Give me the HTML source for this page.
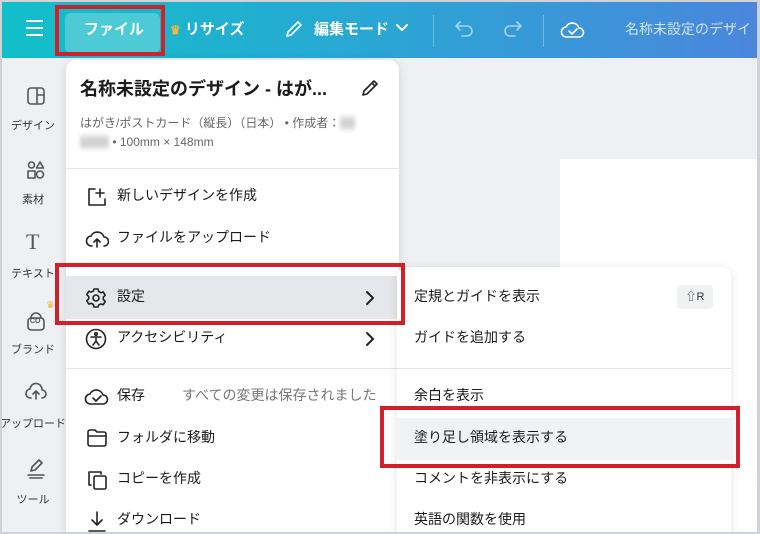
<!DOCTYPE html>
<html><head><meta charset="utf-8"><style>
*{margin:0;padding:0;box-sizing:border-box}
body{width:760px;height:534px;overflow:hidden;background:#cfd2d6;font-family:"Liberation Sans","Noto Sans CJK JP",sans-serif;position:relative}
#frame{position:absolute;left:2px;top:2px;width:755px;height:530px;background:#eef0f4;overflow:hidden}
.top{position:absolute;left:0;top:0;width:755px;height:56px;background:linear-gradient(90deg,#12bfc9 0%,#27a9d3 45%,#4b86dc 100%)}
.t{position:absolute;color:#fff;font-weight:bold;font-size:15px;white-space:nowrap}
.abs{position:absolute}
.side{position:absolute;left:0;top:56px;width:62px;height:480px;background:#eef0f4}
.sl{position:absolute;width:70px;left:-4px;text-align:center;font-size:11px;color:#333}
.menu{position:absolute;background:#fff;box-shadow:0 2px 10px rgba(0,0,0,.12)}
.it{position:absolute;font-size:14px;color:#1b1b1b;white-space:nowrap;margin-top:-2px}
.red{position:absolute;border:4px solid #d0202a}
svg{position:absolute;fill:none;stroke:#222;stroke-width:1.6;stroke-linecap:round;stroke-linejoin:round}
</style></head><body><div id="frame">
<div class="top"></div>
<div class="abs" style="left:24px;top:18px;width:17px;height:2px;background:#fff;box-shadow:0 7px 0 #fff,0 14px 0 #fff"></div>
<div class="abs" style="left:63px;top:11px;width:95px;height:40px;background:#4ccbd6;border-radius:6px"></div>
<div class="t" style="left:82px;top:16px">ファイル</div>
<div class="t" style="left:168px;top:16px"><span style="color:#f5b53a;font-size:12px">♛</span> リサイズ</div>
<svg style="left:282px;top:17px" width="20" height="20" viewBox="0 0 20 20"><path d="M3 17l1-4L14 3l3 3L7 16z" stroke="#fff"/></svg>
<div class="t" style="left:312px;top:16px">編集モード</div>
<svg style="left:393px;top:21px" width="14" height="10" viewBox="0 0 14 10"><path d="M2 2l5 5 5-5" stroke="#fff" stroke-width="2"/></svg>
<div class="abs" style="left:431px;top:13px;width:1px;height:32px;background:rgba(255,255,255,.3)"></div>
<svg style="left:452px;top:17px" width="22" height="20" viewBox="0 0 22 20"><path d="M6 3L2 7l4 4M2 7h11a5 5 0 010 10H8" stroke="rgba(255,255,255,.55)"/></svg>
<svg style="left:499px;top:17px" width="22" height="20" viewBox="0 0 22 20"><path d="M16 3l4 4-4 4M20 7H9a5 5 0 000 10h5" stroke="rgba(255,255,255,.55)"/></svg>
<div class="abs" style="left:541px;top:13px;width:1px;height:32px;background:rgba(255,255,255,.3)"></div>
<svg style="left:558px;top:17px" width="26" height="22" viewBox="0 0 26 22"><path d="M7 18a5 5 0 01-1-10 7 7 0 0113 1 4.5 4.5 0 010 9z M9 12l3 3 5-5" stroke="#fff"/></svg>
<div class="t" style="left:623px;top:17px;font-weight:normal;color:rgba(255,255,255,.75);font-size:14px">名称未設定のデザイ</div>

<div class="side"></div>
<svg style="left:24px;top:84px" width="20" height="20" viewBox="0 0 20 20"><rect x="2" y="2" width="16" height="16" rx="3" stroke="#555"/><path d="M11 2v16M11 9h7" stroke="#555"/></svg>
<div class="sl" style="top:115px">デザイン</div>
<svg style="left:24px;top:158px" width="20" height="20" viewBox="0 0 20 20"><circle cx="5.5" cy="5" r="3" stroke="#555"/><path d="M14 2l3.5 6h-7z" stroke="#555"/><rect x="2" y="11" width="7" height="7" stroke="#555"/><circle cx="14" cy="14.5" r="3.5" stroke="#555"/></svg>
<div class="sl" style="top:189px">素材</div>
<div class="abs" style="left:24px;top:227px;font-family:'Liberation Serif',serif;font-size:22px;color:#555">T</div>
<div class="sl" style="top:263px">テキスト</div>
<div class="abs" style="left:44px;top:298px;color:#f5b53a;font-size:10px">♛</div>
<svg style="left:24px;top:308px" width="20" height="22" viewBox="0 0 20 22"><rect x="2" y="8" width="16" height="12" rx="3" stroke="#555"/><path d="M5 8a5 5 0 0110 0" stroke="#555"/></svg>
<div class="abs" style="left:28px;top:316px;font-size:7px;color:#555;font-weight:bold">CO</div>
<div class="sl" style="top:339px">ブランド</div>
<svg style="left:23px;top:380px" width="22" height="20" viewBox="0 0 22 20"><path d="M6 16a4.5 4.5 0 01-1-9 6 6 0 0112 1 4 4 0 010 8M11 17v-7M8 12l3-3 3 3" stroke="#555"/></svg>
<div class="sl" style="top:413px">アップロード</div>
<svg style="left:24px;top:455px" width="20" height="22" viewBox="0 0 20 22"><path d="M5 14l1-4 7-7 3 3-7 7zM2 18h16M4 21h12" stroke="#555"/></svg>
<div class="sl" style="top:489px">ツール</div>

<div class="abs" style="left:558px;top:157px;width:200px;height:380px;background:#fff"></div>

<div class="menu" style="left:64px;top:58px;width:333px;height:480px;border-radius:10px 10px 0 0"></div>
<div class="it" style="left:78px;top:75px;font-size:18px;font-weight:bold">名称未設定のデザイン - はが...</div>
<svg style="left:358px;top:76px" width="20" height="20" viewBox="0 0 20 20"><path d="M3 17l1-4L14 3l3 3L7 16zM12 5l3 3"/></svg>
<div class="it" style="left:78px;top:114px;font-size:12px;color:#666">はがき/ポストカード（縦長）（日本） • 作成者：<span style="background:#ddd;filter:blur(2px);color:#ccc">■■</span></div>
<div class="it" style="left:78px;top:135px;font-size:12px;color:#666"><span style="background:#ddd;filter:blur(2px);color:#ccc">■■■■</span> • 100mm × 148mm</div>
<div class="abs" style="left:64px;top:166px;width:333px;height:1px;background:#e3e5e8"></div>
<svg style="left:84px;top:184px" width="22" height="22" viewBox="0 0 22 22"><path d="M9 3H3v16h16v-6M14 3v8M10 7h8"/></svg>
<div class="it" style="left:115px;top:185px">新しいデザインを作成</div>
<svg style="left:83px;top:227px" width="24" height="20" viewBox="0 0 24 20"><path d="M7 17a5 5 0 01-1-10 7 7 0 0113 1 4.5 4.5 0 010 9M12 18v-8M9 13l3-3 3 3"/></svg>
<div class="it" style="left:115px;top:227px">ファイルをアップロード</div>
<div class="abs" style="left:64px;top:274px;width:332px;height:43px;background:#e6e7ea"></div>
<svg style="left:83px;top:285px" width="22" height="22" viewBox="0 0 22 22"><circle cx="11" cy="11" r="3"/><path d="M9 2h4l.6 2.5 2.2 1.2 2.4-.8 2 3.4-1.9 1.8v2.4l1.9 1.8-2 3.4-2.4-.8-2.2 1.2L13 20H9l-.6-2.5-2.2-1.2-2.4.8-2-3.4 1.9-1.8V9.5L1.8 7.7l2-3.4 2.4.8 2.2-1.2z"/></svg>
<div class="it" style="left:115px;top:286px">設定</div>
<svg style="left:362px;top:288px" width="12" height="16" viewBox="0 0 12 16"><path d="M3 2l6 6-6 6" stroke-width="2"/></svg>
<svg style="left:83px;top:326px" width="22" height="22" viewBox="0 0 22 22"><circle cx="11" cy="11" r="9.5"/><circle cx="11" cy="6" r="1.3"/><path d="M6 9h10M11 9v4l-3 4M11 13l3 4"/></svg>
<div class="it" style="left:115px;top:327px">アクセシビリティ</div>
<svg style="left:362px;top:329px" width="12" height="16" viewBox="0 0 12 16"><path d="M3 2l6 6-6 6" stroke-width="2"/></svg>
<div class="abs" style="left:64px;top:366px;width:333px;height:1px;background:#e3e5e8"></div>
<svg style="left:82px;top:384px" width="26" height="22" viewBox="0 0 26 22"><path d="M7 18a5 5 0 01-1-10 7 7 0 0113 1 4.5 4.5 0 010 9zM9 12l3 3 5-5"/></svg>
<div class="it" style="left:115px;top:385px">保存</div>
<div class="it" style="left:180px;top:385px;color:#777">すべての変更は保存されました</div>
<svg style="left:84px;top:426px" width="22" height="20" viewBox="0 0 22 20"><path d="M2 4a2 2 0 012-2h5l2 2h7a2 2 0 012 2v10a2 2 0 01-2 2H4a2 2 0 01-2-2zM2 8h18"/></svg>
<div class="it" style="left:115px;top:427px">フォルダに移動</div>
<svg style="left:84px;top:467px" width="22" height="22" viewBox="0 0 22 22"><path d="M5 16H3V3h12v2"/><rect x="8" y="7" width="12" height="13" rx="1.5"/></svg>
<div class="it" style="left:115px;top:468px">コピーを作成</div>
<svg style="left:84px;top:508px" width="22" height="24" viewBox="0 0 22 24"><path d="M11 2v13M6 10l5 5 5-5M3 21h16"/></svg>
<div class="it" style="left:115px;top:509px">ダウンロード</div>

<div class="menu" style="left:395px;top:265px;width:334px;height:275px;border-radius:10px 10px 0 0"></div>
<div class="it" style="left:412px;top:286px">定規とガイドを表示</div>
<div class="abs" style="left:675px;top:283px;width:36px;height:24px;background:#f0f1f3;border-radius:4px;font-size:11px;color:#333;text-align:center;line-height:24px">⇧R</div>
<div class="it" style="left:412px;top:327px">ガイドを追加する</div>
<div class="abs" style="left:395px;top:366px;width:334px;height:1px;background:#e3e5e8"></div>
<div class="it" style="left:412px;top:385px">余白を表示</div>
<div class="abs" style="left:395px;top:416px;width:334px;height:42px;background:#f1f2f4"></div>
<div class="it" style="left:412px;top:427px">塗り足し領域を表示する</div>
<div class="it" style="left:412px;top:468px">コメントを非表示にする</div>
<div class="it" style="left:412px;top:509px">英語の関数を使用</div>

<div class="red" style="left:53px;top:3px;width:110px;height:51px"></div>
<div class="red" style="left:53px;top:261px;width:350px;height:62px"></div>
<div class="red" style="left:378px;top:404px;width:360px;height:62px"></div>
</div></body></html>
